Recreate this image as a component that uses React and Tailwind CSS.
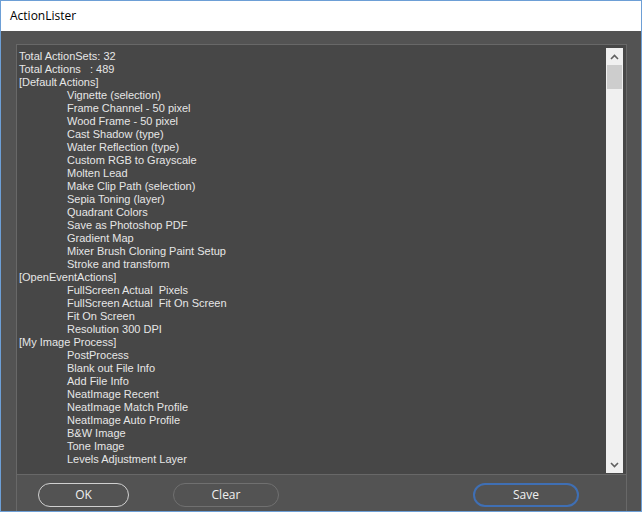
const lines = [
  { t: 'Total ActionSets: 32' },
  { t: 'Total Actions   : 489' },
  { t: '[Default Actions]' },
  { t: 'Vignette (selection)', i: true },
  { t: 'Frame Channel - 50 pixel', i: true },
  { t: 'Wood Frame - 50 pixel', i: true },
  { t: 'Cast Shadow (type)', i: true },
  { t: 'Water Reflection (type)', i: true },
  { t: 'Custom RGB to Grayscale', i: true },
  { t: 'Molten Lead', i: true },
  { t: 'Make Clip Path (selection)', i: true },
  { t: 'Sepia Toning (layer)', i: true },
  { t: 'Quadrant Colors', i: true },
  { t: 'Save as Photoshop PDF', i: true },
  { t: 'Gradient Map', i: true },
  { t: 'Mixer Brush Cloning Paint Setup', i: true },
  { t: 'Stroke and transform', i: true },
  { t: '[OpenEventActions]' },
  { t: 'FullScreen Actual  Pixels', i: true },
  { t: 'FullScreen Actual  Fit On Screen', i: true },
  { t: 'Fit On Screen', i: true },
  { t: 'Resolution 300 DPI', i: true },
  { t: '[My Image Process]' },
  { t: 'PostProcess', i: true },
  { t: 'Blank out File Info', i: true },
  { t: 'Add File Info', i: true },
  { t: 'NeatImage Recent', i: true },
  { t: 'NeatImage Match Profile', i: true },
  { t: 'NeatImage Auto Profile', i: true },
  { t: 'B&W Image', i: true },
  { t: 'Tone Image', i: true },
  { t: 'Levels Adjustment Layer', i: true },
]

function Chevron({ up }) {
  return (
    <svg width="9" height="6" viewBox="0 0 9 6" className="mx-auto">
      <path
        d={up ? 'M1 5 L4.5 1.5 L8 5' : 'M1 1 L4.5 4.5 L8 1'}
        fill="none"
        stroke="#606060"
        strokeWidth="1.6"
      />
    </svg>
  )
}

export default function App() {
  return (
    <div
      className="w-[642px] h-[512px] border border-[#6d9fd6] flex flex-col overflow-hidden"
      style={{ fontFamily: '"Liberation Sans", Arial, sans-serif' }}
    >
      <div className="h-[30px] bg-white flex items-center pl-[9px] text-[12px] text-black" style={{ fontFamily: '"Open Sans", "Noto Sans", sans-serif' }}>
        ActionLister
      </div>
      <div className="flex-1 bg-[#535353] pt-[13px] pl-[15px] pr-[14px] flex">
        <div className="flex-1 border border-b-0 border-[#686868] flex flex-col">
          <div className="h-[430px] bg-[#474747] border-b border-[#686868] flex">
            <div className="flex-1 pt-[5px] pl-[2px] text-[11px] leading-[13px] text-[#e6e6e6] whitespace-pre">
              {lines.map((l, k) => (
                <div key={k} className={l.i ? 'pl-[48px]' : ''}>{l.t}</div>
              ))}
            </div>
            <div className="w-[17px] mt-[3px] mb-[1px] mr-[3px] bg-[#f0f0f0] flex flex-col">
              <div className="h-[17px] flex items-center"><Chevron up /></div>
              <div className="h-[24px] mx-[1px] bg-[#cdcdcd]" />
              <div className="flex-1" />
              <div className="h-[17px] flex items-center"><Chevron /></div>
            </div>
          </div>
          <div className="flex items-start pt-[8px] text-[12px] text-[#f0f0f0]" style={{ fontFamily: '"Open Sans", "Noto Sans", sans-serif' }}>
            <button className="ml-[21px] w-[91px] h-[24px] rounded-full border border-[#d0d0d0] flex items-center justify-center">OK</button>
            <button className="ml-[44px] w-[106px] h-[24px] rounded-full border border-[#707070] flex items-center justify-center">Clear</button>
            <button className="ml-[194px] w-[106px] h-[24px] rounded-full border-2 border-[#3f6fb4] flex items-center justify-center">Save</button>
          </div>
        </div>
      </div>
    </div>
  )
}
